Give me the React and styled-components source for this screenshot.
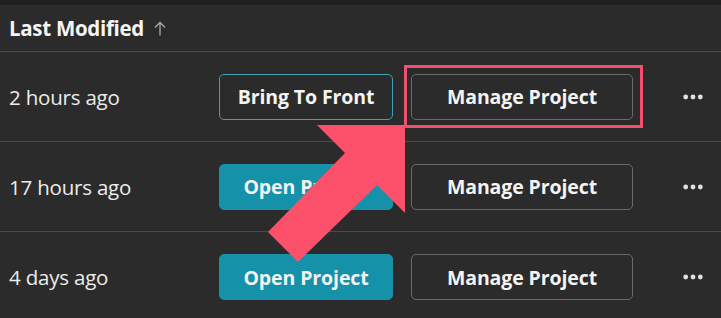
import React from "react";
import styled, { createGlobalStyle } from "styled-components";

const Global = createGlobalStyle`
  html, body { margin: 0; padding: 0; background: #2b2b2b; }
  body { font-family: "Open Sans", "Noto Sans", sans-serif; color: #f2f2f2; overflow: hidden; }
`;

const Page = styled.div`
  position: relative;
  width: 721px;
  height: 318px;
  background: #2b2b2b;
  border-top: 5px solid #1f1f1f;
  box-sizing: border-box;
  overflow: hidden;
`;

const Header = styled.div`
  height: 47px;
  border-bottom: 1px solid #4a4a4a;
  display: flex;
  align-items: center;
  padding-left: 9px;
  box-sizing: border-box;
`;

const HeaderLabel = styled.span`
  font-size: 20.5px;
  font-weight: 700;
  color: #f5f5f5;
  letter-spacing: -0.3px;
`;

const SortIcon = styled.span`
  margin-left: 10px;
  display: inline-flex;
  color: #a8a8a8;
`;

const Row = styled.div`
  height: 90px;
  box-sizing: border-box;
  border-bottom: ${(p) => (p.$last ? "none" : "1px solid #4a4a4a")};
  display: flex;
  align-items: center;
  padding-left: 9px;
`;

const Time = styled.span`
  width: 210px;
  font-size: 20.5px;
  color: #ececec;
  letter-spacing: -0.2px;
`;

const Button = styled.button`
  height: 46px;
  width: ${(p) => p.$w}px;
  box-sizing: border-box;
  border-radius: 5px;
  font-family: inherit;
  font-size: 19.5px;
  font-weight: 700;
  color: #f4f4f4;
  letter-spacing: -0.1px;
  background: ${(p) =>
    p.$variant === "primary" ? "#1591a9" : "transparent"};
  border: 1px solid
    ${(p) =>
      p.$variant === "primary"
        ? "#1591a9"
        : p.$variant === "accent"
        ? "#3aa2b4"
        : "#6a6a6a"};
  padding: 0;
  cursor: pointer;
`;

const Slot = styled.div`
  position: relative;
  margin-left: 18px;
  display: flex;
`;

const Highlight = styled.span`
  position: absolute;
  top: -9px;
  left: -7px;
  right: -10px;
  bottom: -8px;
  border: 3px solid #f2506d;
  pointer-events: none;
`;

const More = styled.span`
  margin-left: 50px;
  display: inline-flex;
  color: #e0e0e0;
`;

const ArrowOverlay = styled.svg`
  position: absolute;
  left: 0;
  top: 0;
  pointer-events: none;
`;

const Dots = () => (
  <svg width="20" height="6" viewBox="0 0 20 6">
    <circle cx="2.7" cy="3" r="2.4" fill="currentColor" />
    <circle cx="10" cy="3" r="2.4" fill="currentColor" />
    <circle cx="17.3" cy="3" r="2.4" fill="currentColor" />
  </svg>
);

const rows = [
  { time: "2 hours ago", first: "Bring To Front", variant: "accent", hl: true },
  { time: "17 hours ago", first: "Open Project", variant: "primary" },
  { time: "4 days ago", first: "Open Project", variant: "primary" },
];

export default function App() {
  return (
    <>
      <Global />
      <Page>
        <Header>
          <HeaderLabel>Last Modified</HeaderLabel>
          <SortIcon>
            <svg width="12" height="15" viewBox="0 0 12 15" fill="none" stroke="currentColor" strokeWidth="1.3">
              <path d="M6 14.5V1.5M1 6.5l5-5 5 5" />
            </svg>
          </SortIcon>
        </Header>
        {rows.map((r, i) => (
          <Row key={i} $last={i === rows.length - 1}>
            <Time>{r.time}</Time>
            <Button $w={174} $variant={r.variant}>{r.first}</Button>
            <Slot>
              <Button $w={222}>Manage Project</Button>
              {r.hl && <Highlight />}
            </Slot>
            <More><Dots /></More>
          </Row>
        ))}
        <ArrowOverlay width="721" height="318" viewBox="0 0 721 318">
          <polygon
            points="405,125 317,125 345,153 268,232 298,262 377,185 405,213"
            fill="#fd506a"
            transform="translate(0,-5)"
          />
        </ArrowOverlay>
      </Page>
    </>
  );
}
